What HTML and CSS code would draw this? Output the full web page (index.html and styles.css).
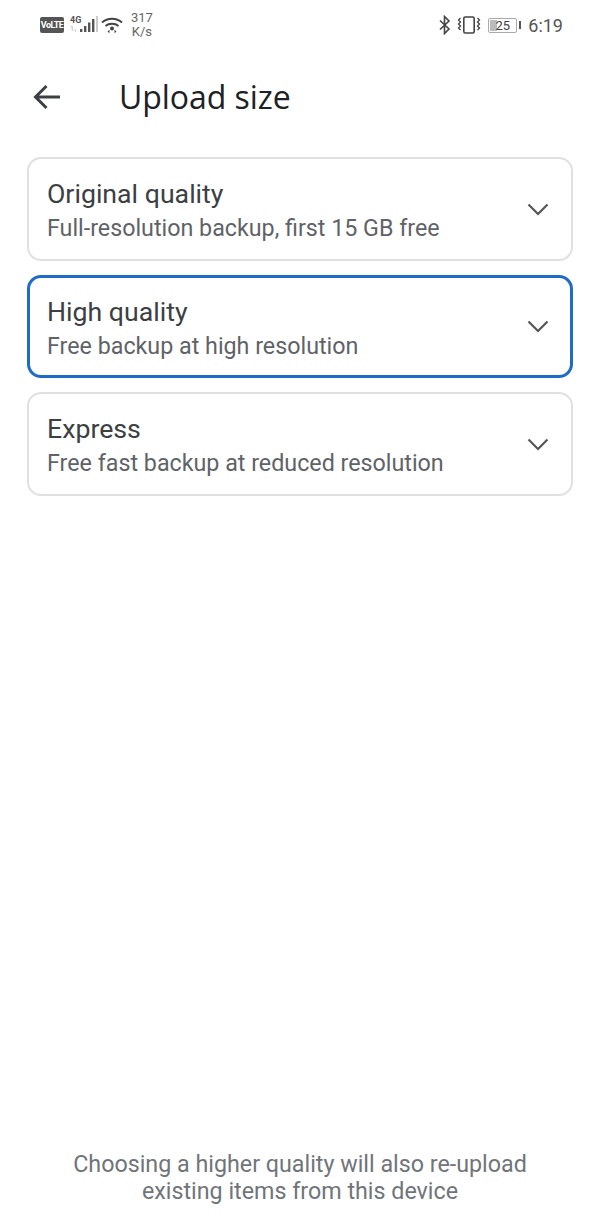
FILE: index.html
```html
<!DOCTYPE html>
<html lang="en">
<head>
<meta charset="utf-8">
<title>Upload size</title>
<link rel="stylesheet" href="styles.css">
</head>
<body>
<div class="page">
  <div class="status">
    <div class="status-left">
      <span class="volte">VoLTE</span>
      <span class="net"><span class="net-4g">4G</span><span class="net-hd">1₁</span></span>
      <svg class="signal" width="20" height="18" viewBox="0 0 20 18"><g fill="#555"><rect x="0" y="13" width="2.4" height="3"/><rect x="4" y="10" width="2.4" height="6"/><rect x="8" y="6.500" width="2.400" height="9.500"/><rect x="12" y="3" width="2.400" height="13"/></g><rect x="16" y="0" width="2" height="16" fill="#ccc"/></svg>
      <svg class="wifi" width="22" height="18" viewBox="0 0 22 18"><g fill="none" stroke="#444" stroke-width="1.900"><path d="M1 6.500C6.500 1.500 15.500 1.500 21 6.500"/><path d="M4.500 10C8 7 14 7 17.500 10"/></g><circle cx="11" cy="12.500" r="2" fill="#444"/><path d="M6.500 15.500l2 1.800v-3.600zM15.500 15.500l-2 1.800v-3.600z" fill="#444"/></svg>
      <span class="speed">317<br>K/s</span>
    </div>
    <div class="status-right">
      <svg class="bt" width="14" height="20" viewBox="0 0 12 20"><path d="M1 5.500l9 8.500-4.500 4.500V1.500L10 6l-9 8.500" fill="none" stroke="#444" stroke-width="1.600"/></svg>
      <svg class="vib" width="24" height="18" viewBox="0 0 24 18"><rect x="6.800" y="1" width="10.400" height="16" rx="1.500" fill="none" stroke="#444" stroke-width="1.600"/><path d="M3.500 2l-2 2 2 2-2 2 2 2-2 2 2 2M20.500 2l2 2-2 2 2 2-2 2 2 2-2 2" fill="none" stroke="#444" stroke-width="1.300"/></svg>
      <span class="battery"><span class="batt-body"><span class="batt-fill"></span><span class="batt-num">25</span></span><span class="batt-tip"></span></span>
      <span class="clock">6:19</span>
    </div>
  </div>
  <header class="bar">
    <svg class="back" width="30" height="28" viewBox="0 0 30 28"><path d="M28 14H4M14.500 3L3.500 14l11 11" fill="none" stroke="#3c4043" stroke-width="3"/></svg>
    <h1 class="title">Upload size</h1>
  </header>
  <main class="options">
    <div class="option">
      <div class="option-text"><div class="option-name">Original quality</div><div class="option-desc">Full-resolution backup, first 15 GB free</div></div>
      <svg class="chev" width="22" height="14" viewBox="0 0 22 14"><path d="M1.500 2.500L11 12l9.500-9.500" fill="none" stroke="#555" stroke-width="2.200"/></svg>
    </div>
    <div class="option selected">
      <div class="option-text"><div class="option-name">High quality</div><div class="option-desc">Free backup at high resolution</div></div>
      <svg class="chev" width="22" height="14" viewBox="0 0 22 14"><path d="M1.500 2.500L11 12l9.500-9.500" fill="none" stroke="#555" stroke-width="2.200"/></svg>
    </div>
    <div class="option">
      <div class="option-text"><div class="option-name">Express</div><div class="option-desc">Free fast backup at reduced resolution</div></div>
      <svg class="chev" width="22" height="14" viewBox="0 0 22 14"><path d="M1.500 2.500L11 12l9.500-9.500" fill="none" stroke="#555" stroke-width="2.200"/></svg>
    </div>
  </main>
  <footer class="note">Choosing a higher quality will also re-upload<br>existing items from this device</footer>
</div>
</body>
</html>
```
FILE: styles.css
```css
* { box-sizing: border-box; }
html, body { margin: 0; padding: 0; background: #fff; }
.page {
  width: 600px; height: 1223px; display: flex; flex-direction: column;
  font-family: Roboto, "Liberation Sans", sans-serif; color: #3c4043;
}
.status { height: 50px; padding: 11px 37px 0 40px; display: flex; justify-content: space-between; align-items: flex-start; }
.status-left, .status-right { display: flex; align-items: center; height: 28px; }
.volte {
  width: 24px; height: 16px; background: #555; color: #fff; border-radius: 2px;
  font-size: 9px; font-weight: 700; display: flex; align-items: center; justify-content: center; letter-spacing: -0.6px;
}
.net { margin-left: 6px; width: 10px; display: flex; flex-direction: column; line-height: 9px; }
.net-4g { font-size: 9px; font-weight: 700; color: #555; white-space: nowrap; }
.net-hd { font-size: 7px; color: #aaa; white-space: nowrap; }
.signal { margin-left: 0; }
.wifi { margin-left: 1px; }
.speed { margin-left: 8px; font-size: 13px; line-height: 14px; color: #666; text-align: center; }
.bt { margin-right: 5px; }
.vib { margin-right: 7px; }
.battery { display: flex; align-items: center; margin-right: 7px; }
.batt-body { position: relative; width: 29px; height: 15px; border: 1px solid #aaa; border-radius: 2px; display: flex; align-items: center; justify-content: center; }
.batt-fill { position: absolute; left: 1px; top: 1px; bottom: 1px; width: 7px; background: #bbb; }
.batt-num { position: relative; font-size: 13px; color: #444; }
.batt-tip { width: 2px; height: 8px; margin-left: 2px; background: #555; }
.clock { font-size: 18px; color: #555; }
.bar { height: 93px; display: flex; align-items: center; padding: 0 0 0 32px; }
.back { flex: none; }
.title { margin: 0 0 0 57px; font-size: 32px; font-weight: 400; color: #202124; font-family: "Open Sans", Roboto, sans-serif; letter-spacing: -0.05px; }
.options { padding: 14px 27px 0; display: flex; flex-direction: column; gap: 14px; }
.option {
  height: 104px; border: 2px solid #e0e0e0; border-radius: 14px; padding: 0 22px 0 18px;
  display: flex; align-items: center; justify-content: space-between;
}
.option.selected { border: 3px solid #1f6cc6; padding: 0 21px 0 17px; height: 103px; }
.option-text { padding-top: 3px; }
.option-name { font-size: 26.700px; line-height: 34px; color: #3c4043; }
.option-desc { font-size: 23.270px; line-height: 34px; color: #5f6368; }
.selected .option-text { padding-top: 4px; }
.chev { flex: none; margin-top: -1px; }
.selected .chev { margin-top: -2px; }
.note { margin-top: auto; padding-bottom: 18px; text-align: center; font-size: 23.270px; line-height: 27px; color: #70757a; }
```
